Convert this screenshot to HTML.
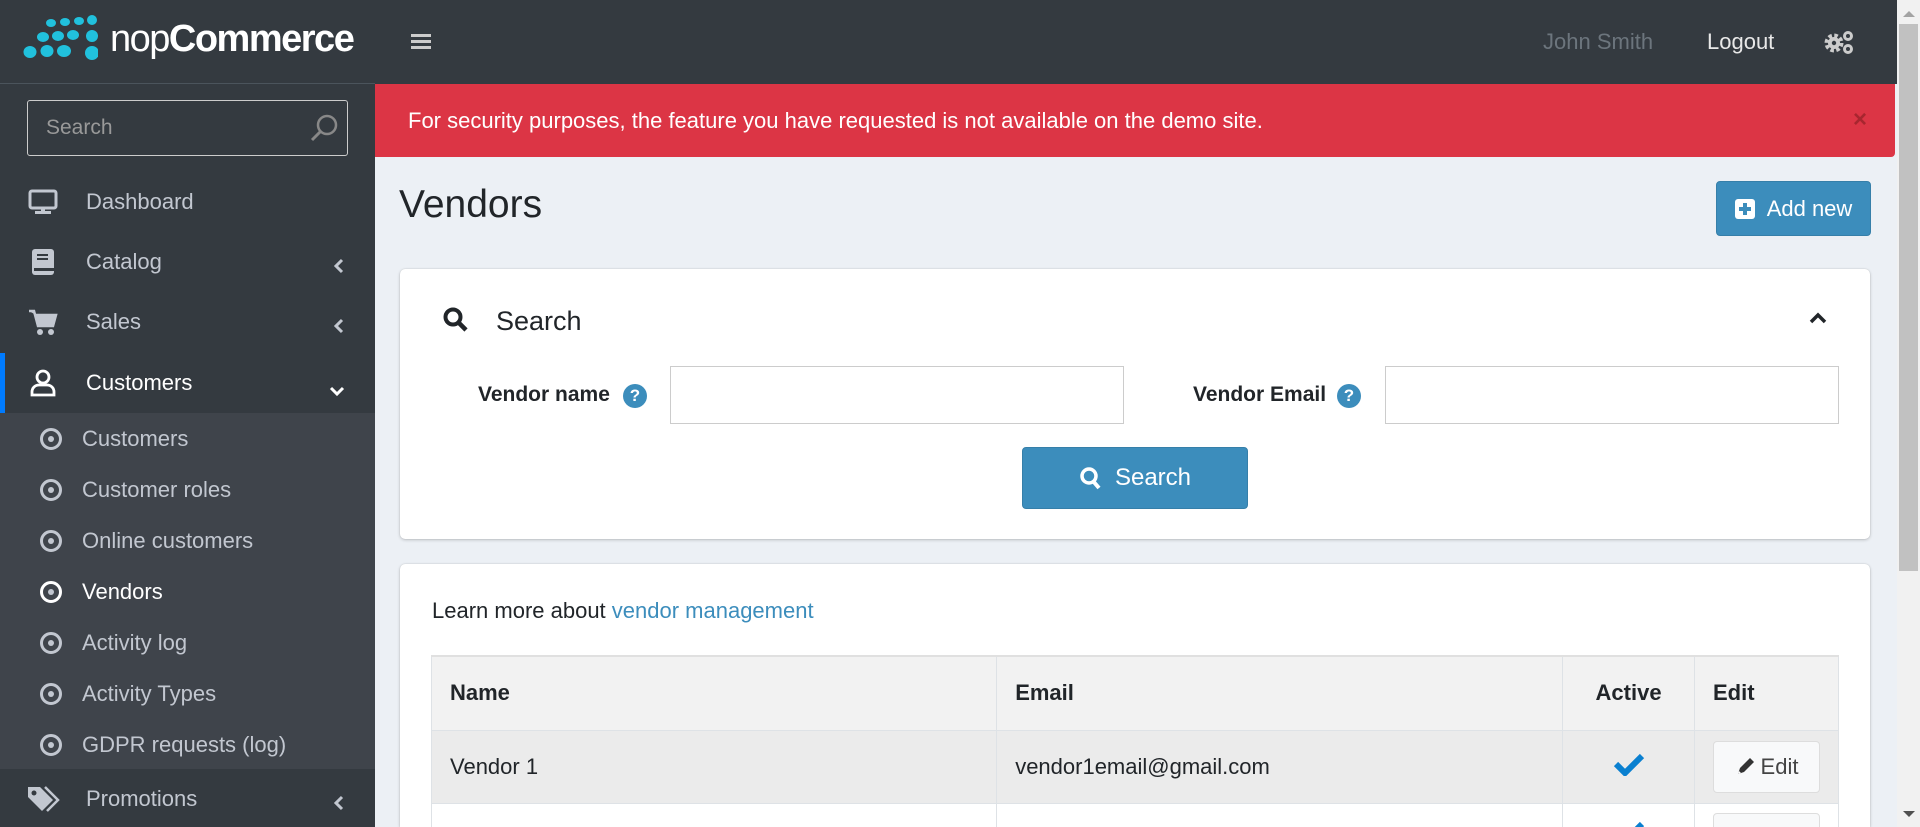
<!DOCTYPE html>
<html><head><meta charset="utf-8"><style>
*{box-sizing:border-box;margin:0;padding:0}
html,body{width:1920px;height:827px;overflow:hidden}
body{background:#ecf0f5;font-family:"Liberation Sans",sans-serif;position:relative;color:#212529}
.abs{position:absolute}
#side{left:0;top:0;width:375px;height:827px;background:#343a40}
.logo{left:0;top:0;width:375px;height:84px;border-bottom:1px solid #4b545c}
.sbox{left:27px;top:100px;width:321px;height:56px;border:1px solid #ccc;border-radius:3px;color:#999;font-size:21px;padding:15px 18px}
.mi{left:0;width:375px;height:60px;color:#c2c7d0;font-size:22px;display:flex;align-items:center}
.mi .ic{width:86px;display:flex;justify-content:center}
.chev{position:absolute;right:30px;top:22px}
.sub{left:0;top:413px;width:375px;height:356px;background:#3f444b}
.si{left:0;width:375px;height:51px;color:#c2c7d0;font-size:22px;display:flex;align-items:center}
.si .c{width:22px;height:22px;border:3px solid #c2c7d0;border-radius:50%;margin-left:40px;margin-right:20px;position:relative;flex:none}
.si .c:after{content:"";position:absolute;left:5px;top:5px;width:6px;height:6px;border-radius:50%;background:#c2c7d0}
#top{left:375px;top:0;width:1522px;height:84px;background:#343a40}
.alert{left:375px;top:84px;width:1520px;height:73px;background:#dc3545;color:#fff;font-size:22px;padding:24px 33px;border-radius:0 0 4px 0}
.card{background:#fff;border-radius:5px;box-shadow:0 0 1px rgba(0,0,0,.2),0 1px 3px rgba(0,0,0,.2);overflow:hidden}
.btn{background:#3c8dbc;border:1px solid #367fa9;border-radius:4px;color:#fff;display:flex;align-items:center;justify-content:center}
.inp{background:#fff;border:1px solid #ccc}
.lbl{font-weight:bold;font-size:21px;color:#212529}
.help{width:24px;height:24px;border-radius:50%;background:#3c8dbc;color:#fff;font-weight:bold;font-size:17px;text-align:center;line-height:24px}
table{border-collapse:collapse;font-size:22px}
td,th{border:1px solid #dee2e6;padding:0 18px;text-align:left}
#sb{left:1897px;top:0;width:23px;height:827px;background:#f1f1f1}
</style></head><body>
<div id="side" class="abs">
 <div class="abs logo">
  <svg class="abs" style="left:18px;top:14px" width="80" height="58">
   <g fill="#21c1dd">
   <ellipse cx="33" cy="9" rx="5" ry="4"/><ellipse cx="47" cy="8" rx="5" ry="4"/><ellipse cx="61" cy="7" rx="5" ry="4"/><ellipse cx="74" cy="6" rx="5" ry="5"/>
   <ellipse cx="25" cy="23" rx="6" ry="5"/><ellipse cx="40" cy="22" rx="6" ry="5"/><ellipse cx="55" cy="21" rx="6" ry="5"/><ellipse cx="74" cy="22" rx="6" ry="6"/>
   <ellipse cx="12" cy="38" rx="6.5" ry="6"/><ellipse cx="29" cy="37" rx="6.5" ry="6"/><ellipse cx="46" cy="37" rx="7" ry="6"/><ellipse cx="74" cy="39" rx="7" ry="7"/>
   </g></svg>
  <div class="abs" style="left:110px;top:18px;color:#fff;font-size:38px;letter-spacing:-1.5px"><span>nop</span><span style="font-weight:bold">Commerce</span></div>
 </div>
 <div class="abs sbox">Search
  <svg class="abs" style="right:8px;top:12px" width="30" height="30"><circle cx="18" cy="12" r="9" fill="none" stroke="#888" stroke-width="2.5"/><line x1="11" y1="19" x2="3" y2="27" stroke="#888" stroke-width="3"/></svg></div>
 <div class="abs mi" style="top:172px"><div class="ic"><svg width="30" height="26"><rect x="2" y="2" width="26" height="17" rx="2" fill="none" stroke="#c2c7d0" stroke-width="3"/><rect x="7" y="22" width="16" height="3" fill="#c2c7d0"/><rect x="13" y="19" width="4" height="3" fill="#c2c7d0"/></svg></div>Dashboard</div>
 <div class="abs mi" style="top:232px"><div class="ic"><svg width="24" height="28"><rect x="1" y="1" width="22" height="26" rx="3" fill="#c2c7d0"/><rect x="6" y="6" width="11" height="2" fill="#343a40"/><rect x="6" y="10" width="11" height="2" fill="#343a40"/><rect x="3" y="20" width="20" height="3" fill="#343a40"/></svg></div>Catalog<span class="chev"><svg width="12" height="16"><path d="M9 2L3 8l6 6" fill="none" stroke="#c2c7d0" stroke-width="3"/></svg></span></div>
 <div class="abs mi" style="top:292px"><div class="ic"><svg width="30" height="28"><path d="M1 3h5l4 15h15l3-11H8" fill="#c2c7d0" stroke="#c2c7d0" stroke-width="2.5"/><circle cx="12" cy="24" r="3" fill="#c2c7d0"/><circle cx="23" cy="24" r="3" fill="#c2c7d0"/></svg></div>Sales<span class="chev"><svg width="12" height="16"><path d="M9 2L3 8l6 6" fill="none" stroke="#c2c7d0" stroke-width="3"/></svg></span></div>
 <div class="abs mi" style="top:353px;color:#fff"><div class="abs" style="left:0;top:0;width:5px;height:60px;background:#007bff"></div><div class="ic"><svg width="26" height="28"><circle cx="13" cy="8" r="6" fill="none" stroke="#fff" stroke-width="2.8"/><path d="M2 26v-3c0-4 3-7 7-7h8c4 0 7 3 7 7v3z" fill="none" stroke="#fff" stroke-width="2.8"/></svg></div>Customers<span class="chev" style="top:24px"><svg width="16" height="12"><path d="M2 3l6 6 6-6" fill="none" stroke="#fff" stroke-width="3"/></svg></span></div>
 <div class="abs sub"></div>
 <div class="abs si" style="top:413px"><span class="c"></span>Customers</div>
 <div class="abs si" style="top:464px"><span class="c"></span>Customer roles</div>
 <div class="abs si" style="top:515px"><span class="c"></span>Online customers</div>
 <div class="abs si" style="top:566px;color:#fff"><span class="c" style="border-color:#fff"></span>Vendors</div>
 <div class="abs si" style="top:617px"><span class="c"></span>Activity log</div>
 <div class="abs si" style="top:668px"><span class="c"></span>Activity Types</div>
 <div class="abs si" style="top:719px"><span class="c"></span>GDPR requests (log)</div>
 <div class="abs mi" style="top:769px"><div class="ic"><svg width="34" height="28"><path d="M2 2h12l13 13-11 11L2 12z" fill="#c2c7d0"/><circle cx="8" cy="8" r="2.5" fill="#343a40"/><path d="M19 2l13 13-11 11" fill="none" stroke="#c2c7d0" stroke-width="2.5"/></svg></div>Promotions<span class="chev"><svg width="12" height="16"><path d="M9 2L3 8l6 6" fill="none" stroke="#c2c7d0" stroke-width="3"/></svg></span></div>
</div>
<div id="top" class="abs">
 <svg class="abs" style="left:36px;top:34px" width="20" height="16"><rect y="0" width="20" height="3" fill="#ccc"/><rect y="6" width="20" height="3" fill="#ccc"/><rect y="12" width="20" height="3" fill="#ccc"/></svg>
 <div class="abs" style="left:1168px;top:29px;color:#6c757d;font-size:22px">John Smith</div>
 <div class="abs" style="left:1332px;top:29px;color:#e8e8e8;font-size:22px">Logout</div>
 <svg class="abs" style="left:1449px;top:30px" width="30" height="24"><circle cx="10" cy="13" r="7.5" fill="none" stroke="#ccc" stroke-width="4" stroke-dasharray="3.5 2.4"/><circle cx="10" cy="13" r="6" fill="#ccc"/><circle cx="10" cy="13" r="2.2" fill="#343a40"/><circle cx="24" cy="6" r="3.5" fill="none" stroke="#ccc" stroke-width="3"/><circle cx="24" cy="19" r="3.5" fill="none" stroke="#ccc" stroke-width="3"/></svg>
</div>
<div class="abs alert">For security purposes, the feature you have requested is not available on the demo site.
 <span class="abs" style="right:28px;top:22px;color:#a8262f;font-size:24px;font-weight:bold">×</span></div>
<div class="abs" style="left:399px;top:183px;font-size:39px;color:#212529">Vendors</div>
<div class="abs btn" style="left:1716px;top:181px;width:155px;height:55px;font-size:22px"><svg width="20" height="20" style="margin-right:12px"><rect width="20" height="20" rx="3" fill="#fff"/><rect x="8" y="4" width="4" height="12" fill="#3c8dbc"/><rect x="4" y="8" width="12" height="4" fill="#3c8dbc"/></svg>Add new</div>
<div class="abs card" style="left:400px;top:269px;width:1470px;height:270px">
 <svg class="abs" style="left:43px;top:38px" width="26" height="26"><circle cx="10" cy="10" r="7.5" fill="none" stroke="#212529" stroke-width="4"/><line x1="15" y1="15" x2="23" y2="23" stroke="#212529" stroke-width="4.5"/></svg>
 <div class="abs" style="left:96px;top:37px;font-size:27px">Search</div>
 <svg class="abs" style="left:1409px;top:43px" width="18" height="12"><path d="M2 10l7-7 7 7" fill="none" stroke="#212529" stroke-width="3.5"/></svg>
 <div class="abs lbl" style="left:78px;top:114px">Vendor name</div>
 <div class="abs help" style="left:223px;top:115px">?</div>
 <div class="abs inp" style="left:270px;top:97px;width:454px;height:58px"></div>
 <div class="abs lbl" style="left:793px;top:114px">Vendor Email</div>
 <div class="abs help" style="left:937px;top:115px">?</div>
 <div class="abs inp" style="left:985px;top:97px;width:454px;height:58px"></div>
 <div class="abs btn" style="left:622px;top:178px;width:226px;height:62px;font-size:24px"><svg width="24" height="24" style="margin-right:12px"><circle cx="10" cy="10" r="7" fill="none" stroke="#fff" stroke-width="3.5"/><line x1="14" y1="15" x2="20" y2="22" stroke="#fff" stroke-width="4"/></svg>Search</div>
</div>
<div class="abs card" style="left:400px;top:564px;width:1470px;height:263px;border-radius:5px 5px 0 0">
 <div class="abs" style="left:32px;top:34px;font-size:22px">Learn more about <span style="color:#3c8dbc">vendor management</span></div>
 <table class="abs" style="left:31px;top:91px;width:1408px">
  <tr style="background:#f2f2f2;height:74px;border-top:2px solid #e0e0e0"><th style="width:567px">Name</th><th style="width:567px">Email</th><th style="width:132px;text-align:center">Active</th><th>Edit</th></tr>
  <tr style="background:#ebebeb;height:73px"><td>Vendor 1</td><td>vendor1email@gmail.com</td><td style="text-align:center"><svg width="32" height="24"><path d="M3 12l9 9L29 4" fill="none" stroke="#0a80d0" stroke-width="6"/></svg></td><td><div style="width:107px;height:52px;border:1px solid #ddd;border-radius:4px;background:#f8f9fa;display:flex;align-items:center;justify-content:center;color:#444;font-size:22px"><svg width="20" height="20" style="margin-right:6px"><path d="M3 17l2-6L15 1l4 4L9 15z" fill="#333"/><path d="M3 17l1-3 2 2z" fill="#fff"/></svg>Edit</div></td></tr>
  <tr style="background:#fff;height:73px"><td></td><td></td><td style="text-align:center;vertical-align:top;padding-top:16px"><svg width="32" height="24"><path d="M3 12l9 9L29 4" fill="none" stroke="#0a80d0" stroke-width="6"/></svg></td><td style="vertical-align:top;padding-top:9px"><div style="width:107px;height:52px;border:1px solid #ddd;border-radius:4px;background:#f8f9fa"></div></td></tr>
 </table>
</div>
<div id="sb" class="abs">
 <svg class="abs" style="left:6px;top:10px" width="12" height="8"><path d="M0 7L6 1l6 6z" fill="#a3a3a3"/></svg>
 <div class="abs" style="left:2px;top:24px;width:19px;height:547px;background:#c1c1c1"></div>
 <svg class="abs" style="left:6px;top:810px" width="12" height="8"><path d="M0 1l6 6 6-6z" fill="#505050"/></svg>
</div>
</body></html>
